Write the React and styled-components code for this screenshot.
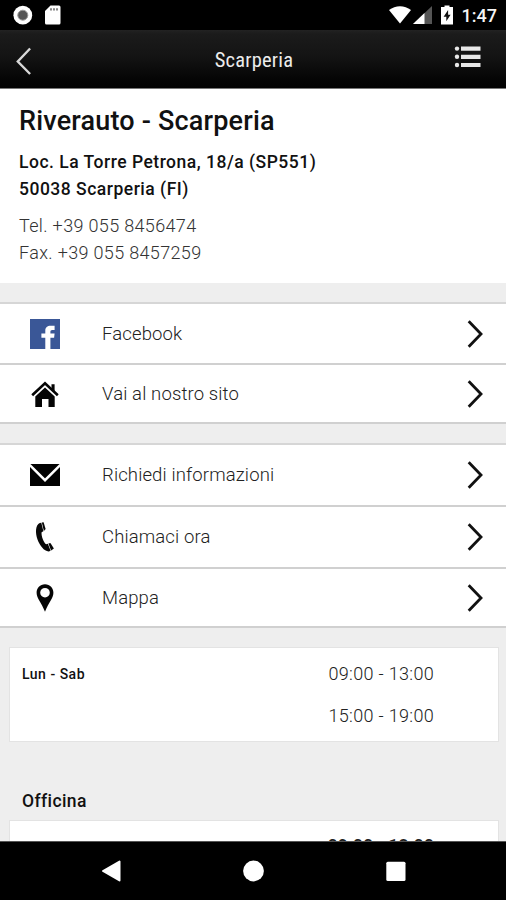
import React from 'react';
import styled, {createGlobalStyle} from 'styled-components';

const GlobalStyle = createGlobalStyle`
  * {
    box-sizing: border-box;
  }
  body {
    margin: 0;
    background-color: #eee;
    font-family: Roboto, "Liberation Sans", sans-serif;
    color: #111;
  }
  svg {
    display: block;
  }
`;

const Screen = styled.div`
  display: flex;
  flex-direction: column;
  width: 506px;
  height: 900px;
  overflow: hidden;
  background-color: #eee;
`;

const StatusBar = styled.div`
  display: flex;
  flex: none;
  align-items: center;
  height: 30px;
  padding: 0 9px 0 13px;
  background-color: black;
`;

const StatusGroup = styled.div`
  display: flex;
  align-items: center;
  gap: ${(props) => props.$gap}px;
`;

const Clock = styled.span`
  padding-top: 1px;
  color: #f4f4f4;
  font-size: 18px;
  font-weight: 500;
  line-height: 29px;
`;

const Spacer = styled.div`
  flex: 1;
`;

const Header = styled.header`
  display: grid;
  grid-template-columns: 60px 1fr 60px;
  flex: none;
  align-items: center;
  height: 59px;
  background: linear-gradient(#222 0, #1b1b1b 4px, #141414 45%, #050505 85%, #020202 100%);
  border-bottom: 1px solid #777;
`;

const HeaderTitle = styled.h1`
  margin: 1px 0 0 2px;
  color: #ececec;
  font-family: "Roboto Condensed", Roboto, sans-serif;
  font-size: 20.5px;
  font-weight: 400;
  line-height: 24px;
  letter-spacing: 0.2px;
  text-align: center;
`;

const IconButton = styled.button`
  padding: ${(props) => props.$padding};
  border: 0;
  background: none;
`;

const Content = styled.main`
  flex: 1;
  min-height: 0;
  overflow: hidden;
`;

const Info = styled.section`
  height: 194px;
  padding: 15px 19px 0;
  background-color: white;
`;

const Name = styled.h2`
  margin: 0 0 10px;
  font-size: 27px;
  font-weight: 500;
  line-height: 35px;
  letter-spacing: 0.18px;
  white-space: nowrap;
`;

const Address = styled.p`
  margin: 0 0 9px;
  font-size: 17.5px;
  font-weight: 500;
  line-height: 27px;
  letter-spacing: 0.5px;
`;

const Phones = styled.p`
  margin: 0;
  color: #333;
  font-size: 18px;
  font-weight: 300;
  line-height: 27px;
  letter-spacing: 0.34px;
`;

const Menu = styled.nav`
  margin-top: 19px;
  border-top: 2px solid #d6d6d6;
`;

const MenuRow = styled.a`
  display: grid;
  grid-template-columns: 102px 1fr 39px;
  align-items: center;
  height: ${(props) => props.$height}px;
  background-color: white;
  border-bottom: 2px solid #d0d0d0;
  color: #222;
  font-size: 18.5px;
  font-weight: 300;
  letter-spacing: 0.13px;
`;

const MenuIcon = styled.span`
  display: flex;
  justify-content: center;
  width: 90px;
`;

const Hours = styled.section`
  display: flex;
  justify-content: space-between;
  height: 95px;
  margin: ${(props) => props.$top}px 7px 0 9px;
  padding: ${(props) => props.$inset}px 64px 0 12px;
  background-color: white;
  border: 1px solid #e3e3e3;
`;

const Days = styled.span`
  font-size: 14px;
  font-weight: 500;
  line-height: 43px;
  letter-spacing: 0.5px;
`;

const Times = styled.div`
  display: flex;
  flex-direction: column;
  color: #222;
  font-size: 18px;
  font-weight: ${(props) => props.$weight};
  line-height: 42px;
  letter-spacing: ${(props) => props.$spacing}px;
`;

const Department = styled.h3`
  margin: 47px 22px 0;
  font-size: 17.5px;
  font-weight: 500;
  line-height: 25px;
  letter-spacing: 0.4px;
`;

const NavBar = styled.footer`
  display: flex;
  flex: none;
  align-items: center;
  justify-content: space-between;
  height: 59px;
  padding: 0 100px 0 101px;
  background-color: black;
  border-top: 1px solid #555;
`;

const Chevron = () => (
    <svg width="20" height="30" viewBox="0 0 20 30" fill="none">
        <path d="M1.7 2.2L14 15L1.7 27.8" stroke="#111" strokeWidth="2.8" />
    </svg>
);

const FacebookIcon = () => (
    <svg width="30" height="30" viewBox="0 0 30 30">
        <rect width="30" height="30" fill="#3a5797" />
        <path
            d="M15.3 30V18.7H11.4V14.4H15.3V11.8C15.3 8.4 17.4 6.8 20.6 6.8H24.6V11H22.3C20.8 11 20.4 11.8 20.4 13V14.4H24.6L24.1 18.7H20.4V30Z"
            fill="white"
        />
    </svg>
);

const HomeIcon = () => (
    <svg width="28" height="27" viewBox="0 0 28 27">
        <path d="M1.2 15.2L14 3.2L26.8 15.2" fill="none" stroke="#050505" strokeWidth="2.6" />
        <path d="M20.5 4.2H23.6V11.5L20.5 8.7Z" fill="#050505" />
        <path d="M14 7.5L23.7 16.6V27H17.5V19H11V27H4.3V16.6Z" fill="#050505" />
    </svg>
);

const MailIcon = () => (
    <svg width="30" height="22" viewBox="0 0 30 22">
        <rect width="30" height="22" fill="#020202" />
        <path d="M-0.5 0.8L15 16.2L30.5 0.8" fill="none" stroke="white" strokeWidth="2.5" />
    </svg>
);

const PhoneIcon = () => (
    <svg width="20" height="30" viewBox="0 0 20 30">
        <path
            d="M4.8 1.1C0.2 3.2 0.2 11.4 2.5 17.5C4.7 23.3 9.2 29.6 13.8 29.4L15.6 28.8L12.8 21.8L11.3 22.2C9 21.4 6 13.8 6.6 10.2L8.4 9.2L6.3 0.8Z"
            fill="#080808"
        />
        <path d="M6.8 0.5L8.6 0.3L10.6 7L8.9 8.9Z" fill="#080808" />
        <path d="M13.4 21.5L15.4 21.1L18.9 26.5L16.1 28.6Z" fill="#080808" />
    </svg>
);

const PinIcon = () => (
    <svg width="18" height="28" viewBox="0 0 18 28">
        <path
            fillRule="evenodd"
            d="M9 0.3C4 0.3 0.6 4 0.6 8.8C0.6 14.4 5.3 18.5 9 27.7C12.7 18.5 17.4 14.4 17.4 8.8C17.4 4 14 0.3 9 0.3ZM9 3.9A4.8 4.8 0 1 1 9 13.5A4.8 4.8 0 1 1 9 3.9Z"
            fill="#050505"
        />
    </svg>
);

const enlaces = [
    {id: 'facebook', label: 'Facebook', icon: <FacebookIcon />, height: 61},
    {id: 'sito', label: 'Vai al nostro sito', icon: <HomeIcon />, height: 59},
];

const contatti = [
    {id: 'info', label: 'Richiedi informazioni', icon: <MailIcon />, height: 62},
    {id: 'chiama', label: 'Chiamaci ora', icon: <PhoneIcon />, height: 62},
    {id: 'mappa', label: 'Mappa', icon: <PinIcon />, height: 59},
];

const MenuList = ({items}) => (
    <Menu>
        {items.map((item) => (
            <MenuRow key={item.id} $height={item.height}>
                <MenuIcon>{item.icon}</MenuIcon>
                <span>{item.label}</span>
                <Chevron />
            </MenuRow>
        ))}
    </Menu>
);

const App = () => {
    return (
        <Screen>
            <GlobalStyle />
            <StatusBar>
                <StatusGroup $gap={12}>
                    <svg width="20" height="20" viewBox="0 0 20 20">
                        <circle cx="9.8" cy="10.2" r="9.4" fill="white" />
                        <circle cx="9.8" cy="10.2" r="5" fill="#555" stroke="#999" />
                    </svg>
                    <svg width="16" height="20" viewBox="0 0 16 20">
                        <path d="M5.5 0.5H14Q15.5 0.5 15.5 2V18Q15.5 19.5 14 19.5H1.5Q0 19.5 0 18V6Z" fill="white" />
                        <path d="M6 3.2V5.5M9 3.2V5.5M12 3.2V5.5" stroke="#555" strokeWidth="1.4" />
                    </svg>
                </StatusGroup>
                <Spacer />
                <StatusGroup $gap={9}>
                    <StatusGroup $gap={2}>
                        <svg width="22" height="18" viewBox="0 0 22 18">
                            <path d="M0 4.1C6.5 -1 15.5 -1 22 4.1L11 17.6Z" fill="white" />
                        </svg>
                        <svg width="19" height="18" viewBox="0 0 19 18">
                            <path d="M19 0V18H0Z" fill="#555" />
                            <path d="M11.5 7.1V18H0Z" fill="white" />
                        </svg>
                    </StatusGroup>
                    <svg width="12" height="20" viewBox="0 0 12 20">
                        <path d="M3.5 0.5H8.5V2H12V19.5H0V2H3.5Z" fill="white" />
                        <path d="M7.1 5L2.6 11.7H5.3V16.3L9.6 9.7H7.1Z" fill="#111" />
                    </svg>
                    <Clock>1:47</Clock>
                </StatusGroup>
            </StatusBar>

            <Header>
                <IconButton $padding="3px 0 0 16px" aria-label="Indietro">
                    <svg width="16" height="30" viewBox="0 0 16 30" fill="none">
                        <path d="M14.1 2.5L1.8 15.5L14.1 28" stroke="#d8d8d8" strokeWidth="2.4" />
                    </svg>
                </IconButton>
                <HeaderTitle>Scarperia</HeaderTitle>
                <IconButton $padding="0 0 5px 8px" aria-label="Menu">
                    <svg width="28" height="24" viewBox="0 0 28 24" fill="#e8e8e8">
                        <circle cx="3" cy="3.6" r="2.2" />
                        <circle cx="3" cy="11.8" r="2.2" />
                        <circle cx="3" cy="20" r="2.2" />
                        <path d="M7 1.5H26.5V5.7H7ZM7 9.7H26.5V13.9H7ZM7 17.9H26.5V22.1H7Z" />
                    </svg>
                </IconButton>
            </Header>

            <Content>
                <Info>
                    <Name>Riverauto - Scarperia</Name>
                    <Address>
                        Loc. La Torre Petrona, 18/a (SP551)
                        <br />
                        50038 Scarperia (FI)
                    </Address>
                    <Phones>
                        Tel. +39 055 8456474
                        <br />
                        Fax. +39 055 8457259
                    </Phones>
                </Info>

                <MenuList items={enlaces} />
                <MenuList items={contatti} />

                <Hours $top={19} $inset={5}>
                    <Days>Lun - Sab</Days>
                    <Times $weight={300} $spacing={0.32}>
                        <span>09:00 - 13:00</span>
                        <span>15:00 - 19:00</span>
                    </Times>
                </Hours>

                <Department>Officina</Department>
                <Hours $top={6} $inset={4}>
                    <Days />
                    <Times $weight={500} $spacing={0}>
                        <span>09:00 - 13:00</span>
                    </Times>
                </Hours>
            </Content>

            <NavBar>
                <svg width="20" height="22" viewBox="0 0 20 22">
                    <path d="M18.5 1.5V20.5L2 11Z" fill="white" stroke="white" strokeWidth="2" strokeLinejoin="round" />
                </svg>
                <svg width="22" height="22" viewBox="0 0 22 22">
                    <circle cx="10.5" cy="11" r="10.4" fill="white" />
                </svg>
                <svg width="20" height="20" viewBox="0 0 20 20">
                    <rect x="0.3" y="0.8" width="19.2" height="19.2" rx="1.5" fill="white" />
                </svg>
            </NavBar>
        </Screen>
    );
};

export default App;
